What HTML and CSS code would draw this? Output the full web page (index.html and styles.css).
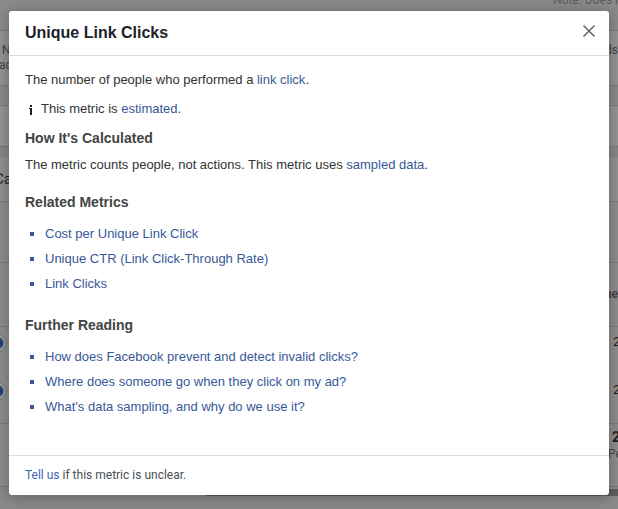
FILE: index.html
```html
<!DOCTYPE html>
<html lang="en">
<head>
<meta charset="utf-8">
<title>Unique Link Clicks</title>
<link rel="stylesheet" href="styles.css">
</head>
<body>
<div class="page" aria-hidden="true">
  <div class="row note"><span></span><span class="muted">Note: Does i</span></div>
  <div class="row intro"><span class="intro-text">&nbsp;N<br>ac</span><span class="intro-end">ds</span></div>
  <div class="row gap"></div>
  <div class="row band"></div>
  <div class="row tabs"><span class="large">Ca</span></div>
  <div class="row tools"></div>
  <div class="row head"><span></span><b>ue</b></div>
  <div class="row item"><i class="ring"></i><span class="value">2</span></div>
  <div class="row item last"><i class="ring"></i><span class="value">2</span></div>
  <div class="row total"><span></span><span class="sum"><b>2</b><span>Pe</span></span></div>
  <div class="row end"><i class="scroll"></i></div>
</div>
<div class="overlay">
  <section class="modal" role="dialog" aria-modal="true" aria-labelledby="title">
    <header class="modal-header">
      <h1 id="title">Unique Link Clicks</h1>
      <button class="close" type="button" aria-label="Close">
        <svg width="14" height="14" viewBox="0 0 14 14"><path d="M1.5 1.5l11 11M12.5 1.5l-11 11" fill="none" stroke="#5b636e" stroke-width="1.5"/></svg>
      </button>
    </header>
    <div class="modal-body">
      <p>The number of people who performed a <a href="#">link click</a>.</p>
      <p class="info"><svg width="16" height="14" viewBox="0 0 16 14"><path d="M5 3h2v2H5zM4 6h3v7H5V7H4z" fill="#1d2129"/></svg><span>This metric is <a href="#">estimated</a>.</span></p>
      <h2>How It's Calculated</h2>
      <p>The metric counts people, not actions. This metric uses <a href="#">sampled data</a>.</p>
      <h2 class="group">Related Metrics</h2>
      <ul>
        <li><a href="#">Cost per Unique Link Click</a></li>
        <li><a href="#">Unique CTR (Link Click-Through Rate)</a></li>
        <li><a href="#">Link Clicks</a></li>
      </ul>
      <h2 class="group">Further Reading</h2>
      <ul>
        <li><a href="#">How does Facebook prevent and detect invalid clicks?</a></li>
        <li><a href="#">Where does someone go when they click on my ad?</a></li>
        <li><a href="#">What's data sampling, and why do we use it?</a></li>
      </ul>
    </div>
    <footer class="modal-footer"><a href="#">Tell us</a> if this metric is unclear.</footer>
  </section>
</div>
</body>
</html>
```
FILE: styles.css
```css
* { box-sizing: border-box; }
body {
  margin: 0;
  min-height: 100vh;
  display: grid;
  overflow: hidden;
  background: #8d8d8d;
  color: #333;
  font: 13px/18px "Liberation Sans", Arial, sans-serif;
}
.page, .overlay { grid-area: 1 / 1; min-width: 0; }
.page { font: 12px/15px Roboto, sans-serif; color: #444; overflow: hidden; }
.row {
  display: flex;
  justify-content: space-between;
  align-items: center;
  border-bottom: 1px solid #797979;
}
.note { height: 31px; background: #8a8a8a; align-items: flex-start; }
.muted { color: #5c5c5c; line-height: 1px; }
.intro { height: 55px; background: #939393; }
.intro-text { margin-left: -1px; }
.intro-end { align-self: flex-start; padding-top: 12px; }
.gap { height: 20px; background: #8a8a8a; }
.band { height: 41px; background: #939393; }
.tabs { height: 55px; background: #919191; border-top: 10px solid #878787; }
.large { font-size: 15px; margin-left: -6px; color: #222; }
.tools { height: 61px; }
.head { height: 64px; }
.item { height: 48px; border-bottom: 0; align-items: flex-start; padding-top: 7px; }
.item.last { height: 49px; border-bottom: 1px solid #797979; }
.value { font-size: 13px; color: #222; width: 5px; }
.sum { display: grid; line-height: 17px; width: 10px; }
.sum b { font-size: 14px; padding-left: 4px; color: #222; }
.ring {
  width: 18px;
  height: 18px;
  margin-left: -11px;
  border: 1px solid #777;
  border-radius: 50%;
  background: radial-gradient(circle at 8px 8px, #141b2b 2px, #29457d 3px, #29457d 5px, #999 6px);
}
.total { height: 63px; align-items: flex-start; padding-top: 5px; }
.end { height: 22px; border: 0; background: #898989; align-items: flex-start; padding-top: 2px; }
.scroll { height: 7px; flex: 1; margin-left: 33%; border-radius: 4px 0 0 4px; background: #5c5c5c; }

.overlay { display: flex; padding: 11px 9px 14px; }
.modal {
  flex: 1;
  min-width: 0;
  display: flex;
  flex-direction: column;
  background: #fff;
  border-radius: 3px;
  box-shadow: 0 2px 14px rgba(0, 0, 0, .3);
  position: relative;
}
.modal-header {
  height: 45px;
  padding: 0 12px 0 16px;
  display: flex;
  align-items: center;
  justify-content: space-between;
  border-bottom: 1px solid #dadce0;
}
h1, h2, p, ul { margin: 0; }
h1 { font-size: 16px; line-height: 20px; color: #1d2129; }
.close {
  width: 16px;
  height: 16px;
  padding: 0;
  border: 0;
  background: none;
  display: grid;
  place-items: center;
  margin-bottom: 4px;
}
.modal-body { flex: 1; padding: 15px 16px; }
p { margin-bottom: 11px; }
.info { display: flex; align-items: center; }
h2 { font-size: 14px; line-height: 18px; color: #444; margin-bottom: 9px; }
h2.group { margin: 19px 0 10px; }
ul { padding: 0 0 1px 20px; list-style: square; color: #3b5998; }
li { line-height: 25px; }
a { color: #385898; text-decoration: none; }
.modal-footer {
  padding: 10px 16px;
  border-top: 1px solid #dadce0;
  font: 12px/19px Roboto, sans-serif;
  color: #4b4f56;
}
.modal-footer a { color: #4267b2; }
```
